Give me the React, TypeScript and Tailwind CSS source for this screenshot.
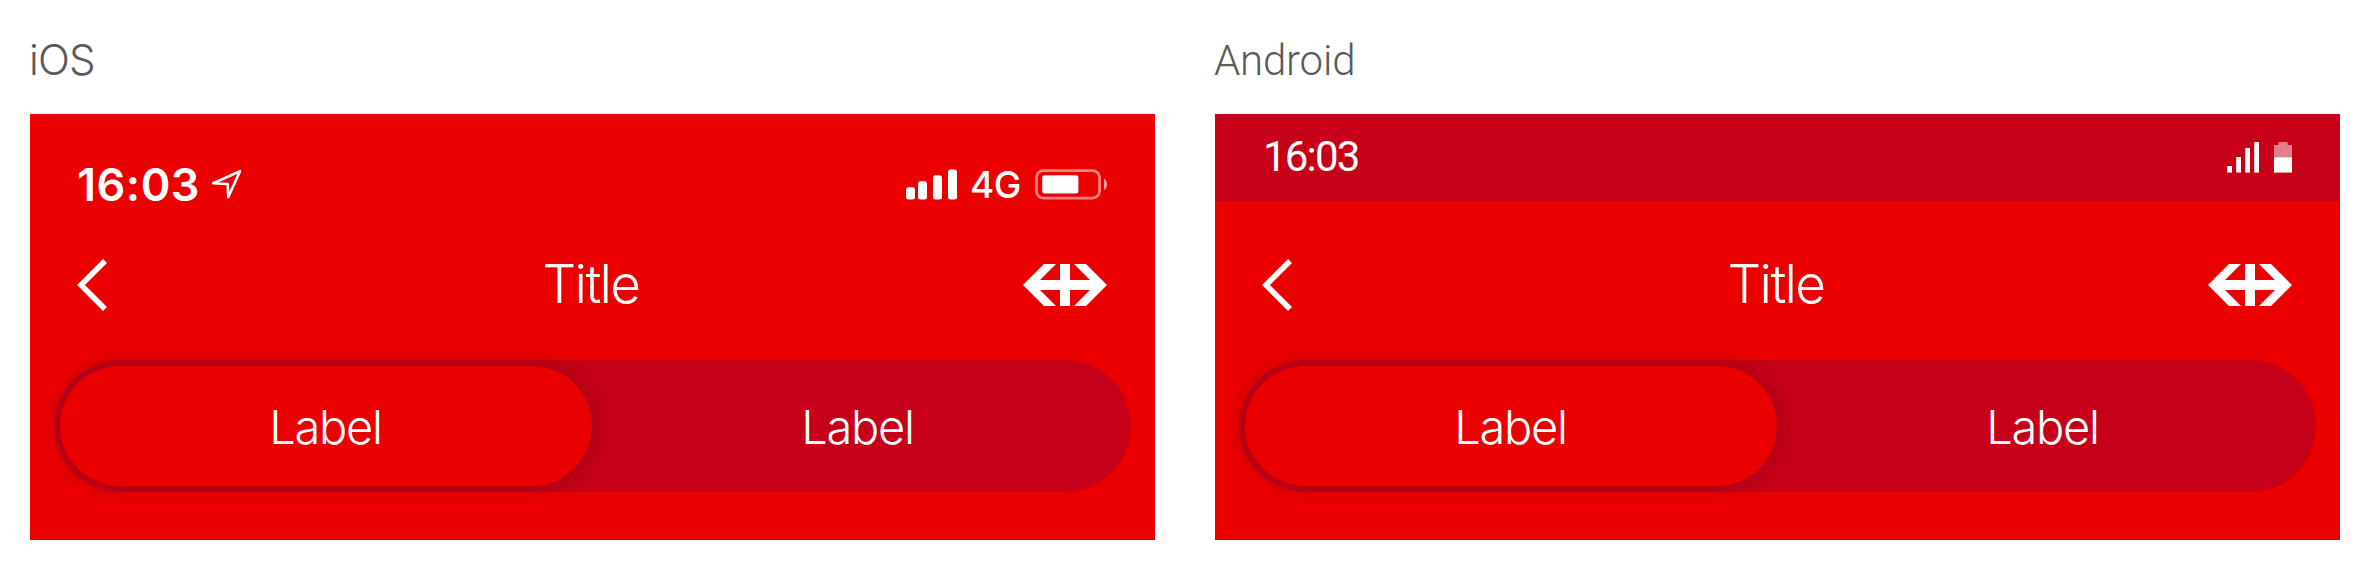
import type { ReactNode } from "react";

function BackIcon() {
  return (
    <svg className="h-[60px] w-[36px]" viewBox="0 0 36 60" fill="none">
      <path d="M30 6 6 30l24 24" stroke="white" strokeWidth="5.6" />
    </svg>
  );
}

function RailLogo() {
  return (
    <svg className="h-[42px] w-[84px]" viewBox="0 0 84 42" fill="white">
      <path d="M0 21 21 0h12L17 16h20V0h10v16h20L51 0h12l21 21-21 21H51l16-16H47v16H37V26H17l16 16H21z" />
    </svg>
  );
}

function IosStatusBar() {
  return (
    <div className="flex h-[87px] items-start justify-between pt-[55px] pr-[48px] pl-[48px]">
      <div className="flex h-[32px] items-center">
        <span className="-ml-px w-[135px] font-['Inter',sans-serif] text-[45px] leading-[32px] font-[560] tracking-[0.5px] whitespace-nowrap">
          16:03
        </span>
        <svg className="h-[32px] w-[32px]" viewBox="0 0 32 32" fill="none">
          <path d="M1.2 14.2 28 2.2 16.2 28.2 15.7 15z" stroke="white" strokeWidth="2.6" strokeLinejoin="round" />
        </svg>
      </div>
      <div className="flex h-[32px] items-center">
        <svg className="h-[32px] w-[64px]" viewBox="0 0 64 32" fill="white">
          <rect x="0" y="18.2" width="9" height="12.3" rx="2.5" />
          <rect x="12" y="12.2" width="9" height="18.3" rx="2.5" />
          <rect x="27" y="6.2" width="9" height="24.3" rx="2.5" />
          <rect x="42" y="0.4" width="9" height="30.1" rx="2.5" />
        </svg>
        <span className="w-[65px] font-['Inter',sans-serif] text-[37px] leading-[32px] font-medium tracking-[-0.5px] whitespace-nowrap">
          4G
        </span>
        <svg className="h-[32px] w-[72px]" viewBox="0 0 72 32" fill="white">
          <rect x="1.4" y="1.7" width="63.2" height="27.4" rx="7" fill="none" stroke="white" strokeOpacity="0.5" strokeWidth="2.8" />
          <rect x="7.2" y="6.2" width="36.2" height="18.4" rx="2.5" />
          <path d="M69 9.6q3 2 3 5.8t-3 5.8z" fillOpacity="0.6" />
        </svg>
      </div>
    </div>
  );
}

function AndroidStatusBar() {
  return (
    <div className="flex h-[87px] items-start justify-between bg-[#c60018] pt-[27px] pr-[48px] pl-[48px]">
      <span className="font-['Roboto',sans-serif] text-[42px] leading-[32px] font-normal tracking-[-1.8px] whitespace-nowrap">
        16:03
      </span>
      <svg className="h-[32px] w-[66px]" viewBox="0 0 66 32" fill="white">
        <rect x="1.2" y="25" width="4.8" height="6.6" />
        <rect x="10.2" y="16" width="4.8" height="15.6" />
        <rect x="19.2" y="7" width="4.8" height="24.6" />
        <rect x="28.2" y="1" width="4.8" height="30.6" />
        <path d="M48 16.2V4h4.4V1h9.2v3H66v12.2z" fillOpacity="0.5" />
        <rect x="48" y="16.2" width="18" height="15.4" />
      </svg>
    </div>
  );
}

function NavBar() {
  return (
    <div className="flex h-[159px] items-start justify-between pr-[48px] pl-[45px]">
      <div className="flex h-[168px] w-[84px] items-center">
        <BackIcon />
      </div>
      <h2 className="flex h-[168px] items-center pb-[2px] font-['Inter',sans-serif] text-[53px] leading-[60px] font-[300] tracking-[-1.6px]">
        Title
      </h2>
      <div className="flex h-[168px] items-center">
        <RailLogo />
      </div>
    </div>
  );
}

function SegmentedControl() {
  return (
    <div className="mx-[24px] flex h-[132px] rounded-full bg-[#c60018] p-[6px]">
      <button className="flex w-[532px] items-center justify-center rounded-full bg-[#eb0000] pt-[2px] pr-[1px] font-['Inter',sans-serif] text-[47px] font-[300] tracking-[-1.3px] shadow-[0_0_24px_rgba(0,0,0,0.2)]">
        Label
      </button>
      <button className="flex w-[532px] items-center justify-center pt-[2px] pr-[1px] font-['Inter',sans-serif] text-[47px] font-[300] tracking-[-1.3px]">
        Label
      </button>
    </div>
  );
}

function Phone({ heading, statusBar }: { heading: ReactNode; statusBar: ReactNode }) {
  return (
    <section className="w-[1125px]">
      <div className="flex h-[114px] items-start pt-[36px] text-[#5a5a5a]">{heading}</div>
      <div className="h-[426px] overflow-hidden bg-[#eb0000] text-white">
        {statusBar}
        <NavBar />
        <SegmentedControl />
      </div>
    </section>
  );
}

export default function App() {
  return (
    <main className="flex h-[570px] w-[2370px] gap-[60px] bg-white px-[30px]">
      <Phone
        heading={<h1 className="-mt-px -ml-px font-['Inter',sans-serif] text-[42px] leading-[50px] font-[300] tracking-[-0.8px]">iOS</h1>}
        statusBar={<IosStatusBar />}
      />
      <Phone
        heading={<h1 className="-ml-px font-['Roboto',sans-serif] text-[42px] leading-[50px] font-light tracking-[-0.2px]">Android</h1>}
        statusBar={<AndroidStatusBar />}
      />
    </main>
  );
}
